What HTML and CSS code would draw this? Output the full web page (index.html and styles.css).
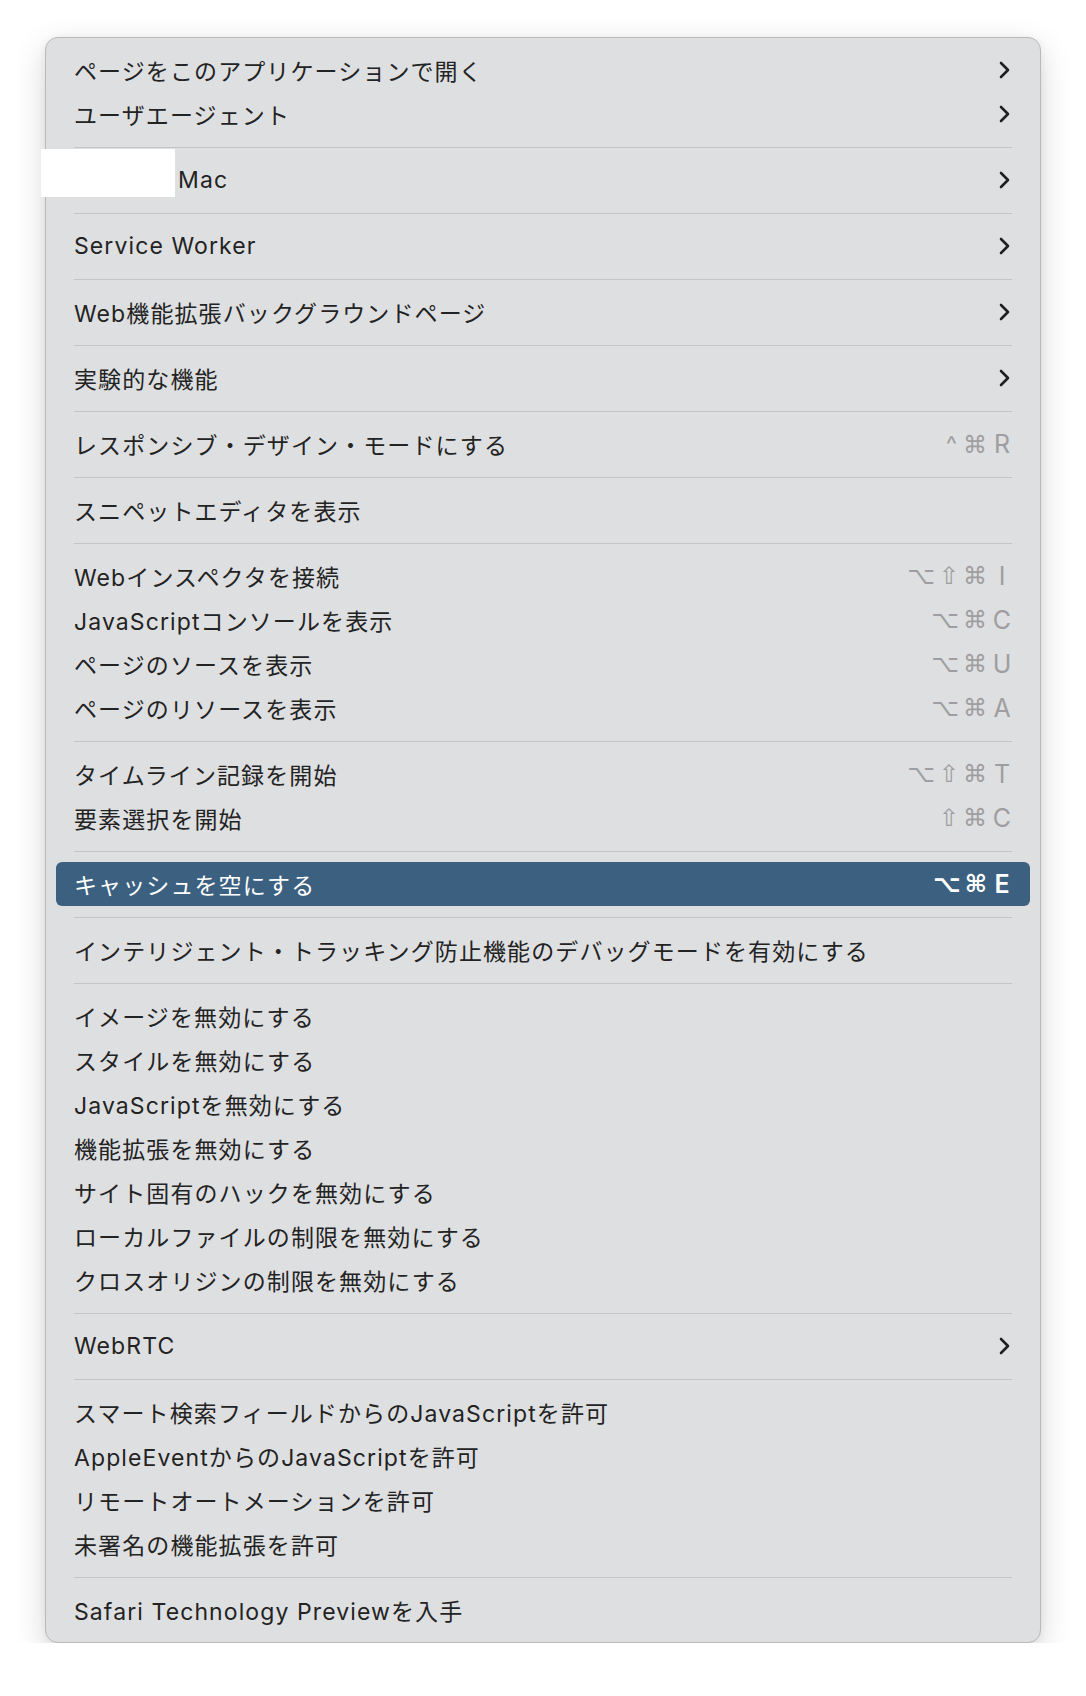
FILE: index.html
```html
<!DOCTYPE html>
<html lang="ja">
<head>
<meta charset="utf-8">
<title>開発メニュー</title>
<link rel="stylesheet" href="styles.css">
</head>
<body>
<div class="menu">
  <div class="item"><span class="label">ページをこのアプリケーションで開く</span><svg class="chev" viewBox="0 0 11 18"><path d="M2 2 L9 9 L2 16"/></svg></div>
  <div class="item"><span class="label">ユーザエージェント</span><svg class="chev" viewBox="0 0 11 18"><path d="M2 2 L9 9 L2 16"/></svg></div>
  <div class="sep"></div>
  <div class="item mac"><span class="redact"></span><span class="label mac-label">Mac</span><svg class="chev" viewBox="0 0 11 18"><path d="M2 2 L9 9 L2 16"/></svg></div>
  <div class="sep"></div>
  <div class="item"><span class="label">Service Worker</span><svg class="chev" viewBox="0 0 11 18"><path d="M2 2 L9 9 L2 16"/></svg></div>
  <div class="sep"></div>
  <div class="item"><span class="label">Web機能拡張バックグラウンドページ</span><svg class="chev" viewBox="0 0 11 18"><path d="M2 2 L9 9 L2 16"/></svg></div>
  <div class="sep"></div>
  <div class="item"><span class="label">実験的な機能</span><svg class="chev" viewBox="0 0 11 18"><path d="M2 2 L9 9 L2 16"/></svg></div>
  <div class="sep"></div>
  <div class="item"><span class="label">レスポンシブ・デザイン・モードにする</span><span class="sc"><span class="mods"><span class="ctl">^</span>⌘</span><span class="key">R</span></span></div>
  <div class="sep"></div>
  <div class="item"><span class="label">スニペットエディタを表示</span></div>
  <div class="sep"></div>
  <div class="item"><span class="label">Webインスペクタを接続</span><span class="sc"><span class="mods">⌥⇧⌘</span><span class="key">I</span></span></div>
  <div class="item"><span class="label">JavaScriptコンソールを表示</span><span class="sc"><span class="mods">⌥⌘</span><span class="key">C</span></span></div>
  <div class="item"><span class="label">ページのソースを表示</span><span class="sc"><span class="mods">⌥⌘</span><span class="key">U</span></span></div>
  <div class="item"><span class="label">ページのリソースを表示</span><span class="sc"><span class="mods">⌥⌘</span><span class="key">A</span></span></div>
  <div class="sep"></div>
  <div class="item"><span class="label">タイムライン記録を開始</span><span class="sc"><span class="mods">⌥⇧⌘</span><span class="key">T</span></span></div>
  <div class="item"><span class="label">要素選択を開始</span><span class="sc"><span class="mods">⇧⌘</span><span class="key">C</span></span></div>
  <div class="sep"></div>
  <div class="item active"><span class="label">キャッシュを空にする</span><span class="sc"><span class="mods">⌥⌘</span><span class="key">E</span></span></div>
  <div class="sep"></div>
  <div class="item"><span class="label">インテリジェント・トラッキング防止機能のデバッグモードを有効にする</span></div>
  <div class="sep"></div>
  <div class="item"><span class="label">イメージを無効にする</span></div>
  <div class="item"><span class="label">スタイルを無効にする</span></div>
  <div class="item"><span class="label">JavaScriptを無効にする</span></div>
  <div class="item"><span class="label">機能拡張を無効にする</span></div>
  <div class="item"><span class="label">サイト固有のハックを無効にする</span></div>
  <div class="item"><span class="label">ローカルファイルの制限を無効にする</span></div>
  <div class="item"><span class="label">クロスオリジンの制限を無効にする</span></div>
  <div class="sep"></div>
  <div class="item"><span class="label">WebRTC</span><svg class="chev" viewBox="0 0 11 18"><path d="M2 2 L9 9 L2 16"/></svg></div>
  <div class="sep"></div>
  <div class="item"><span class="label">スマート検索フィールドからのJavaScriptを許可</span></div>
  <div class="item"><span class="label">AppleEventからのJavaScriptを許可</span></div>
  <div class="item"><span class="label">リモートオートメーションを許可</span></div>
  <div class="item"><span class="label">未署名の機能拡張を許可</span></div>
  <div class="sep"></div>
  <div class="item"><span class="label">Safari Technology Previewを入手</span></div>
</div>
</body>
</html>
```
FILE: styles.css
```css
html, body {
  margin: 0;
  padding: 0;
  background: #ffffff;
}

.menu {
  box-sizing: border-box;
  width: 996px;
  margin: 37px 0 0 45px;
  padding: 10px;
  background: #dedfe1;
  border: 1px solid #b9b9bb;
  border-radius: 13px;
  box-shadow: 0 10px 32px rgba(0, 0, 0, 0.16), 0 2px 8px rgba(0, 0, 0, 0.06);
  font-family: "Inter", "Noto Sans CJK JP", sans-serif;
  font-size: 23px;
  letter-spacing: 1.1px;
  color: #232323;
}

.item {
  position: relative;
  display: flex;
  align-items: center;
  height: 44px;
  padding: 0 20px 0 18px;
  border-radius: 6px;
}

.label {
  flex: 1;
  white-space: nowrap;
}

.mac-label {
  padding-left: 104px;
}

.redact {
  position: absolute;
  left: -15px;
  top: -9px;
  width: 134px;
  height: 48px;
  background: #ffffff;
}

.chev {
  width: 11px;
  height: 18px;
  fill: none;
  stroke: #1f1f1f;
  stroke-width: 2.6;
  stroke-linecap: round;
  stroke-linejoin: round;
}

.sc {
  display: flex;
  align-items: center;
  margin-right: -3px;
  color: #9e9ea0;
  letter-spacing: 0;
}

.mods {
  font-family: "DejaVu Sans", sans-serif;
  font-size: 24px;
  letter-spacing: 4px;
}

.ctl {
  font-family: "Inter", sans-serif;
  font-size: 24px;
  letter-spacing: 6px;
}

.key {
  width: 22px;
  text-align: center;
  font-family: "Inter", sans-serif;
  font-size: 25px;
}

.active {
  background: #3b6080;
  color: #ffffff;
}

.active .sc {
  color: #ffffff;
  font-weight: 600;
}

.sep {
  height: 1px;
  margin: 11px 18px 10px;
  background: #c4c4c6;
}
```
